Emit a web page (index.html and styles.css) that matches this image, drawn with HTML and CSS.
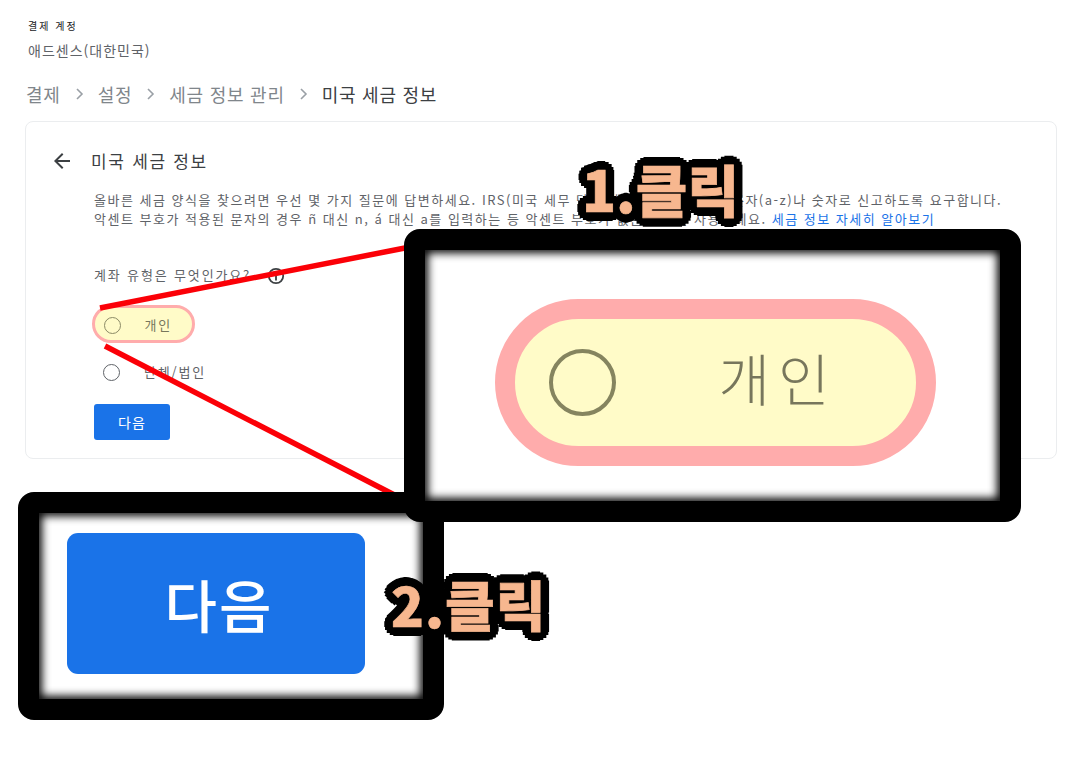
FILE: index.html
```html
<!DOCTYPE html>
<html lang="ko">
<head>
    <meta charset="UTF-8">
    <meta name="viewport" content="width=device-width, initial-scale=1.0">
    <title>미국 세금 정보</title>
    <link rel="stylesheet" href="styles.css">
</head>
<body>

    <div class="page">
        <div class="account-label">결제 계정</div>
        <div class="account-name">애드센스(대한민국)</div>

        <nav class="crumbs">
            <span>결제</span>
            <svg class="crumb-sep" viewBox="0 0 11 14"><path d="M3 2 8 7 3 12" /></svg>
            <span>설정</span>
            <svg class="crumb-sep" viewBox="0 0 11 14"><path d="M3 2 8 7 3 12" /></svg>
            <span>세금 정보 관리</span>
            <svg class="crumb-sep" viewBox="0 0 11 14"><path d="M3 2 8 7 3 12" /></svg>
            <span class="crumb-current">미국 세금 정보</span>
        </nav>

        <section class="card">
            <div class="card-head">
                <svg class="back" viewBox="0 0 24 24"><path d="M20 11H7.83l5.59-5.59L12 4l-8 8 8 8 1.41-1.41L7.83 13H20v-2z" /></svg>
                <h1>미국 세금 정보</h1>
            </div>
            <div class="card-body">
                <p class="intro">올바른 세금 양식을 찾으려면 우선 몇 가지 질문에 답변하세요. IRS(미국 세무 당국)에서는 정보를 영어 문자(a-z)나 숫자로 신고하도록 요구합니다.<br>악센트 부호가 적용된 문자의 경우 ñ 대신 n, á 대신 a를 입력하는 등 악센트 부호가 없는 문자를 사용하세요. <a href="#">세금 정보 자세히 알아보기</a></p>

                <div class="question">
                    <span>계좌 유형은 무엇인가요?</span>
                    <svg class="info" viewBox="0 0 18 18">
                        <circle cx="9" cy="9" r="7.2" />
                        <path d="M9 8v5.5M9 4.2v2" />
                    </svg>
                </div>

                <div class="option option-marked"><span class="radio"></span><span>개인</span></div>
                <div class="option"><span class="radio"></span><span>단체/법인</span></div>

                <button class="next">다음</button>
            </div>
        </section>
    </div>

    <!-- annotations drawn over the screenshot -->
    <svg class="lines" viewBox="0 0 1080 765">
        <line x1="100" y1="308" x2="410" y2="247" />
        <line x1="105" y1="346" x2="410" y2="503" />
    </svg>

    <div class="zoom zoom-next">
        <div class="big-next">다음</div>
    </div>

    <div class="zoom zoom-option">
        <div class="big-pill">
            <span class="big-radio"></span>
            <span class="big-label">개인</span>
        </div>
    </div>

    <div class="step step-one">1.클릭</div>
    <div class="step step-two">2.클릭</div>

</body>
</html>
```

FILE: styles.css
```css
* { box-sizing: border-box; }

body {
    margin: 0;
    width: 1080px;
    height: 765px;
    overflow: hidden;
    position: relative;
    background: #fff;
    color: #3c4043;
    font-family: "Noto Sans CJK KR", Roboto, sans-serif;
}

.page {
    padding: 18px 24px 0 26px;
}

.account-label {
    margin-left: 2px;
    font-size: 10px;
    line-height: 16px;
    letter-spacing: 2px;
    color: #202124;
}
.account-name {
    margin: 6px 0 0 2px;
    font-size: 14px;
    line-height: 20px;
    letter-spacing: 1px;
    color: #5f6368;
}

.crumbs {
    display: flex;
    align-items: center;
    gap: 13px;
    margin-top: 20px;
    height: 28px;
    font-size: 18px;
    letter-spacing: 0.75px;
    color: #80868b;
}
.crumb-current { color: #3c4043; }
.crumb-sep {
    width: 11px;
    height: 14px;
    fill: none;
    stroke: #9aa0a6;
    stroke-width: 1.6;
}

.card {
    margin: 13px 0 0 -1px;
    width: 1032px;
    height: 338px;
    border: 1px solid #ebedef;
    border-radius: 8px;
    padding: 27px 0 0 24px;
}
.card-head {
    display: flex;
    align-items: center;
    gap: 17px;
    height: 24px;
}
.card-head h1 {
    margin: 0;
    font-size: 17px;
    font-weight: 400;
    letter-spacing: 1.7px;
    line-height: 22px;
    color: #3c4043;
}
.back {
    width: 24px;
    height: 24px;
    fill: #3c4043;
}

.card-body {
    padding: 17px 0 0 44px;
}
.intro {
    margin: 0;
    font-size: 13px;
    line-height: 19px;
    letter-spacing: 1.5px;
    color: #5f6368;
    white-space: nowrap;
}
.intro a {
    color: #1a73e8;
    text-decoration: none;
}

.question {
    display: flex;
    align-items: center;
    gap: 16px;
    margin-top: 34px;
    height: 24px;
    font-size: 13px;
    letter-spacing: 1.85px;
    color: #5f6368;
}
.info {
    width: 18px;
    height: 18px;
    margin-top: 3px;
    fill: none;
    stroke: #3c4043;
    stroke-width: 1.8;
}

.option {
    display: flex;
    align-items: center;
    gap: 24px;
    width: 103px;
    height: 38px;
    margin: 19px 0 0 -2px;
    padding-left: 11px;
    font-size: 13px;
    letter-spacing: 1.8px;
    color: #5f6368;
    white-space: nowrap;
}
.option-marked {
    border: 3.5px solid #ffacac;
    border-radius: 19px;
    background: #fffbc8;
    padding-left: 8.5px;
    color: #77765c;
}
.option-marked .radio { border-color: #8b8a66; }
.option + .option { margin-top: 9px; }
.radio {
    width: 17px;
    height: 17px;
    margin-top: 2px;
    border: 1.5px solid #5f6368;
    border-radius: 50%;
    flex: none;
}

.next {
    display: block;
    width: 76px;
    height: 36px;
    margin-top: 14px;
    border: none;
    border-radius: 3px;
    background: #1a73e8;
    color: #fff;
    font-family: inherit;
    font-size: 14px;
    letter-spacing: 1px;
}

.lines {
    position: absolute;
    left: 0;
    top: 0;
    width: 1080px;
    height: 765px;
}
.lines line {
    stroke: #fb0007;
    stroke-width: 5.5;
}

.zoom {
    position: absolute;
    display: flex;
    align-items: center;
    justify-content: center;
    background: #fff;
    border: 21px solid #000;
    border-radius: 16px;
}
.zoom::after {
    content: "";
    position: absolute;
    inset: 0;
    box-shadow: inset 0 0 8px 3px #000;
}
.zoom-option {
    left: 404px;
    top: 229px;
    width: 617px;
    height: 293px;
    padding: 13px 0 0 5px;
}
.zoom-next {
    left: 18px;
    top: 492px;
    width: 426px;
    height: 228px;
    padding: 0 30px 6px 0;
}

.big-pill {
    display: flex;
    align-items: center;
    gap: 103px;
    width: 441px;
    height: 167px;
    padding-left: 34px;
    border: 20px solid #ffacac;
    border-radius: 84px;
    background: #fffbc8;
    color: #77765c;
}
.big-label {
    margin-bottom: 12px;
    font-size: 56px;
    font-weight: 300;
    letter-spacing: 8px;
}
.big-radio {
    width: 67px;
    height: 67px;
    border: 4px solid #85845f;
    border-radius: 50%;
    flex: none;
}

.big-next {
    display: flex;
    align-items: center;
    justify-content: center;
    width: 298px;
    height: 141px;
    padding-left: 6px;
    border-radius: 11px;
    background: #1a73e8;
    color: #fff;
    font-size: 57px;
    font-weight: 500;
    letter-spacing: 2px;
}

.step {
    position: absolute;
    font-weight: 900;
    color: #f7b78f;
    white-space: nowrap;
    line-height: 1;
    -webkit-text-stroke: 0.7px #f7b78f;
    /* round black outline, a text stroke gives square corners */
    text-shadow:
        9px 0 #000, -9px 0 #000, 0 9px #000, 0 -9px #000,
        6.4px 6.4px #000, -6.4px 6.4px #000, 6.4px -6.4px #000, -6.4px -6.4px #000,
        8.3px 3.4px #000, -8.3px 3.4px #000, 8.3px -3.4px #000, -8.3px -3.4px #000,
        3.4px 8.3px #000, -3.4px 8.3px #000, 3.4px -8.3px #000, -3.4px -8.3px #000,
        4px 0 #000, -4px 0 #000, 0 4px #000, 0 -4px #000;
}
.step-one {
    left: 582px;
    top: 160px;
    font-size: 56px;
}
.step-two {
    left: 391px;
    top: 577px;
    font-size: 54px;
    letter-spacing: 1px;
}
```
